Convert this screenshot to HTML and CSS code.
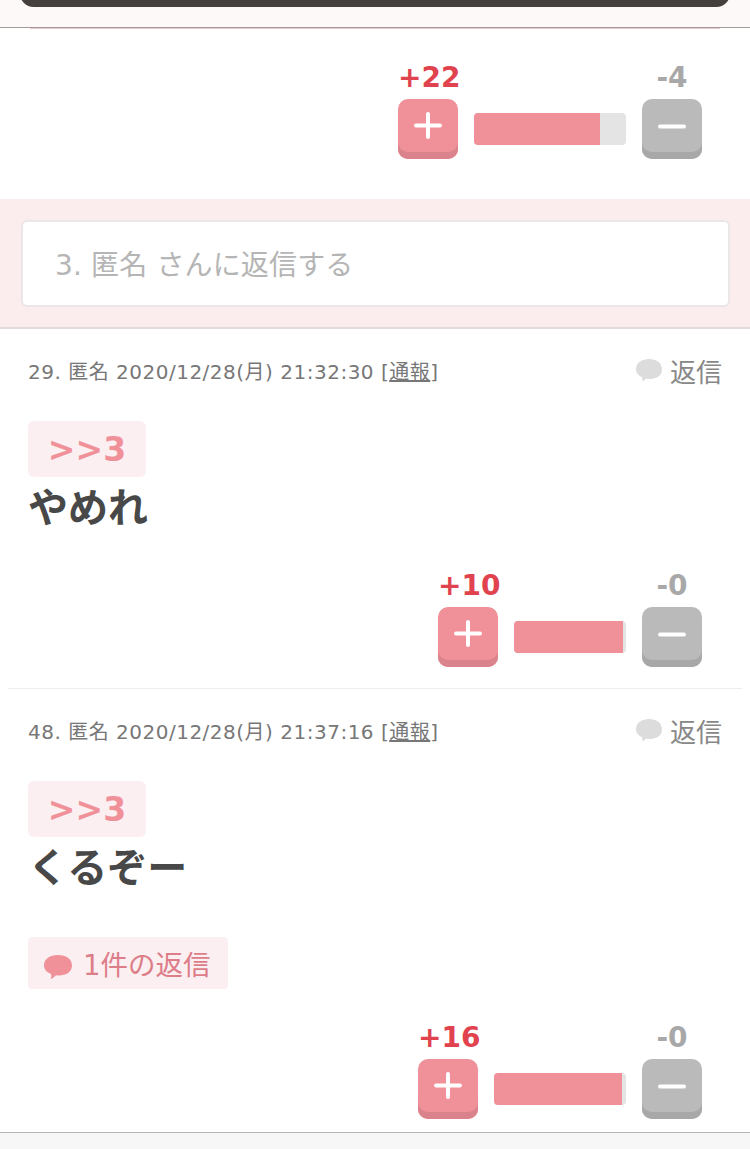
FILE: index.html
```html
<!DOCTYPE html>
<html lang="ja">
<head>
  <meta charset="UTF-8">
  <title>返信</title>
  <link rel="stylesheet" href="styles.css">
</head>
<body>
<div class="top">
  <div class="top__bar"></div>
</div>
<div class="top__edge"></div>

<div class="votes votes--first">
  <div class="vote">
    <span class="vote__count vote__count--plus">+22</span>
    <span></span>
    <span class="vote__count vote__count--minus">-4</span>
    <button class="vote__btn vote__btn--plus"><svg viewBox="0 0 60 60"><path d="M30 15V38M18 26.5H42"/></svg></button>
    <div class="vote__bar"><div class="vote__fill" style="width: 83%"></div></div>
    <button class="vote__btn vote__btn--minus"><svg viewBox="0 0 60 60"><path d="M18 27.5H42"/></svg></button>
  </div>
</div>

<div class="reply-form">
  <div class="reply-form__input">3. 匿名 さんに返信する</div>
</div>

<div class="comment comment--first">
  <div class="comment__head">
    <div class="comment__meta">29. 匿名 2020/12/28(月) 21:32:30 [<a href="#">通報</a>]</div>
    <div class="comment__reply">
      <svg class="bubble bubble--grey" viewBox="0 0 26 24"><path d="M13 1C20 1 26 4.5 26 11.5C26 17.5 20.5 21 14 21C12.5 21 11.5 21 10 20.5C9 22 7.5 23 6 23C6.5 21.5 6.5 20 6 19C2.5 17.5 0 15 0 11.5C0 4.5 6 1 13 1Z"/></svg>
      返信
    </div>
  </div>
  <div class="comment__anchor">&gt;&gt;3</div>
  <div class="comment__body">やめれ</div>
  <div class="votes">
    <div class="vote">
      <span class="vote__count vote__count--plus">+10</span>
      <span></span>
      <span class="vote__count vote__count--minus">-0</span>
      <button class="vote__btn vote__btn--plus"><svg viewBox="0 0 60 60"><path d="M30 15V38M18 26.5H42"/></svg></button>
      <div class="vote__bar vote__bar--mid"><div class="vote__fill" style="width: 97%"></div></div>
      <button class="vote__btn vote__btn--minus"><svg viewBox="0 0 60 60"><path d="M18 27.5H42"/></svg></button>
    </div>
  </div>
</div>

<div class="comment comment--last">
  <div class="comment__head">
    <div class="comment__meta">48. 匿名 2020/12/28(月) 21:37:16 [<a href="#">通報</a>]</div>
    <div class="comment__reply">
      <svg class="bubble bubble--grey" viewBox="0 0 26 24"><path d="M13 1C20 1 26 4.5 26 11.5C26 17.5 20.5 21 14 21C12.5 21 11.5 21 10 20.5C9 22 7.5 23 6 23C6.5 21.5 6.5 20 6 19C2.5 17.5 0 15 0 11.5C0 4.5 6 1 13 1Z"/></svg>
      返信
    </div>
  </div>
  <div class="comment__anchor">&gt;&gt;3</div>
  <div class="comment__body">くるぞー</div>
  <div class="comment__replies">
    <svg class="bubble bubble--pink" viewBox="0 0 28 24"><path d="M14 0C22 0 28 4 28 10.5C28 17 22 20.5 15 20.5C14 20.5 13 20.5 12 20.3C10.5 22 8.5 23.5 6.5 24C7.5 22.5 7.5 20.5 7 19C3 17.5 0 14.5 0 10.5C0 4 6 0 14 0Z"/></svg>
    1件の返信
  </div>
  <div class="votes">
    <div class="vote">
      <span class="vote__count vote__count--plus">+16</span>
      <span></span>
      <span class="vote__count vote__count--minus">-0</span>
      <button class="vote__btn vote__btn--plus"><svg viewBox="0 0 60 60"><path d="M30 15V38M18 26.5H42"/></svg></button>
      <div class="vote__bar vote__bar--wide"><div class="vote__fill" style="width: 97%"></div></div>
      <button class="vote__btn vote__btn--minus"><svg viewBox="0 0 60 60"><path d="M18 27.5H42"/></svg></button>
    </div>
  </div>
</div>

<div class="bottom"></div>
</body>
</html>
```

FILE: styles.css
```css
* {
  margin: 0;
  padding: 0;
  box-sizing: border-box;
}

:root {
  --color-pink: #f09199;
  --color-pink-dark: #db838c;
  --color-pink-light: #fbeff1;
  --color-red: #e0434e;
  --color-grey: #bababa;
  --color-grey-dark: #a8a8a8;
  --font-jp: "DejaVu Sans", "Noto Sans CJK JP", sans-serif;
}

html,
body {
  height: 1149px;
  overflow: hidden;
}

body {
  background: #fff;
  font-family: var(--font-jp);
  color: #444;
}

.top {
  height: 28px;
  padding: 0 20px;
  background: #fdf9f8;
  border-bottom: 1px solid #a09a9a;
  overflow: hidden;
}

.top__bar {
  height: 27px;
  margin-top: -20px;
  background: #453f3e;
  border-radius: 14px;
}

.top__edge {
  height: 1px;
  margin: 0 30px;
  background: #e9c9cd;
}

/* vote rows */
.votes {
  display: flex;
  justify-content: flex-end;
  padding-right: 48px;
}

.votes--first {
  padding-top: 30px;
  height: 170px;
}

.vote {
  display: grid;
  grid-template-columns: 60px auto 60px;
  grid-template-rows: 36px 60px;
  column-gap: 16px;
  row-gap: 4px;
}

.vote__count {
  font-size: 28px;
  line-height: 38px;
  font-weight: 700;
  text-align: center;
  white-space: nowrap;
}

.vote__count--plus {
  color: var(--color-red);
}

.vote__count--minus {
  color: #a8a8a8;
}

.vote__btn {
  display: block;
  width: 60px;
  height: 60px;
  border: none;
  border-radius: 10px;
}

.vote__btn svg {
  display: block;
  width: 60px;
  height: 60px;
  fill: none;
  stroke: #fff;
  stroke-width: 4;
  stroke-linecap: round;
}

.vote__btn--plus {
  background: var(--color-pink);
  box-shadow: inset 0 -7px 0 var(--color-pink-dark);
}

.vote__btn--minus {
  background: var(--color-grey);
  box-shadow: inset 0 -7px 0 var(--color-grey-dark);
}

.vote__bar {
  width: 152px;
  height: 32px;
  margin-top: 14px;
  background: #e4e4e4;
  border-radius: 4px;
  overflow: hidden;
}

.vote__bar--mid {
  width: 112px;
}

.vote__bar--wide {
  width: 132px;
}

.vote__fill {
  height: 100%;
  background: var(--color-pink);
}

/* reply form */
.reply-form {
  height: 130px;
  padding: 21px 20px 0 21px;
  background: #fbecee;
  border-bottom: 2px solid #e3dadc;
}

.reply-form__input {
  height: 87px;
  padding-left: 32px;
  background: #fff;
  border: 2px solid #ebe6e7;
  border-radius: 6px;
  font-size: 28px;
  letter-spacing: .15px;
  line-height: 87px;
  color: #b5b5b5;
}

/* comments */
.comment {
  margin: 0 8px;
  padding: 0 20px;
}

.comment--first {
  height: 360px;
  border-bottom: 1px solid #eeeeee;
}

.comment--last {
  height: 443px;
}

.comment__head {
  display: flex;
  justify-content: space-between;
  align-items: center;
  height: 88px;
  padding-bottom: 6px;
}

.comment__meta {
  font-size: 20px;
  letter-spacing: .5px;
  color: #777;
}

.comment__meta a {
  color: #777;
}

.comment__reply {
  display: flex;
  align-items: center;
  gap: 8px;
  font-size: 26px;
  color: #888;
}

.bubble {
  display: block;
}

.bubble--grey {
  width: 26px;
  height: 24px;
  fill: #dcdcdc;
}

.bubble--pink {
  width: 28px;
  height: 24px;
  margin-top: 4px;
  fill: var(--color-pink);
}

.comment__anchor {
  width: 118px;
  height: 56px;
  margin-top: 4px;
  background: var(--color-pink-light);
  border-radius: 6px;
  font-size: 33px;
  font-weight: 700;
  line-height: 58px;
  text-align: center;
  color: var(--color-pink);
}

.comment__body {
  height: 60px;
  font-size: 40px;
  font-weight: 700;
  line-height: 62px;
  color: #484848;
}

.comment__replies {
  display: flex;
  align-items: center;
  gap: 11px;
  width: 200px;
  height: 52px;
  margin-top: 40px;
  padding-top: 4px;
  padding-left: 16px;
  background: var(--color-pink-light);
  border-radius: 4px;
  font-size: 27.5px;
  line-height: 54px;
  color: #dd7d88;
}

.comment .votes {
  padding-right: 20px;
  margin-top: 30px;
}

.bottom {
  height: 17px;
  background: #f7f7f7;
  border-top: 1px solid #b5b5b5;
}
```
